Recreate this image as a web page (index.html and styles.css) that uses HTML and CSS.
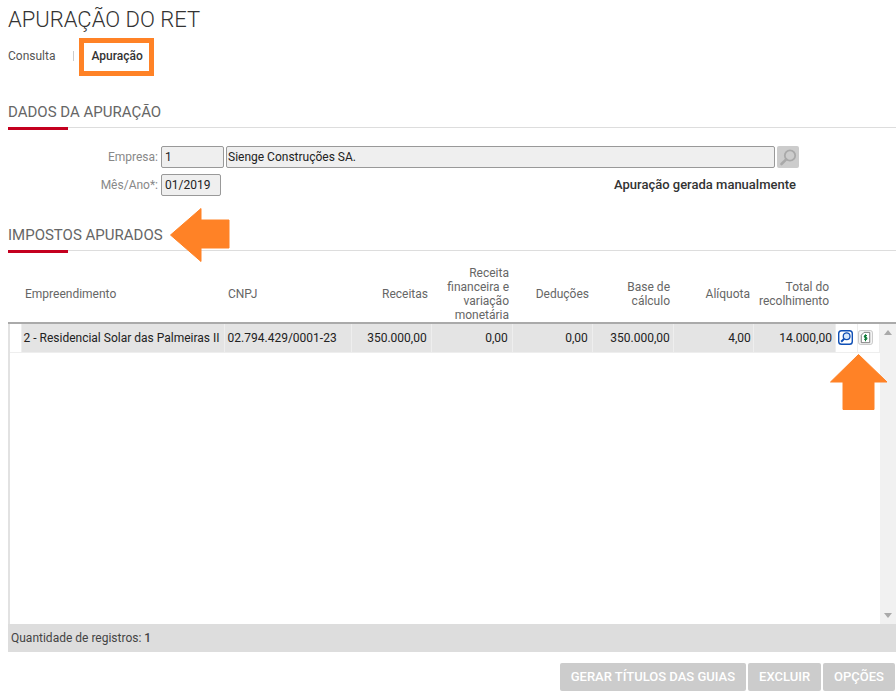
FILE: index.html
```html
<!DOCTYPE html>
<html lang="pt-BR">
<head>
  <meta charset="UTF-8" />
  <meta name="viewport" content="width=device-width, initial-scale=1.0"/>
  <title>Apuração do RET</title>
  <link rel="stylesheet" href="styles.css">
</head>
<body>
  <h1 class="page-title">APURAÇÃO DO RET</h1>

  <!-- Tabs -->
  <div class="tabs">
    <span class="tab">Consulta</span>
    <span class="tab-sep"></span>
    <span class="tab tab-active">Apuração</span>
  </div>

  <!-- Dados da apuração -->
  <h2 class="section-title">DADOS DA APURAÇÃO</h2>
  <div class="form">
    <div class="form-row">
      <label class="form-label">Empresa:</label>
      <div class="field field-code">1</div>
      <div class="field field-name">Sienge Construções SA.</div>
      <div class="search-btn">
        <svg width="22" height="22" viewBox="0 0 22 22" fill="none">
          <circle cx="13" cy="9.5" r="5.2" stroke="#a9a9a9" stroke-width="1.8"/>
          <path d="M9.2 13.4L4.5 18" stroke="#a9a9a9" stroke-width="2.6" stroke-linecap="round"/>
        </svg>
      </div>
    </div>
    <div class="form-row">
      <label class="form-label">Mês/Ano*:</label>
      <div class="field field-date">01/2019</div>
      <div class="form-note">Apuração gerada manualmente</div>
    </div>
  </div>

  <!-- Impostos apurados -->
  <h2 class="section-title section-taxes">IMPOSTOS APURADOS</h2>

  <table class="grid grid-head">
    <tr>
      <th class="c-gap"></th>
      <th class="c-name left">Empreendimento</th>
      <th class="c-cnpj left">CNPJ</th>
      <th class="c-rec">Receitas</th>
      <th class="c-fin">Receita financeira e variação monetária</th>
      <th class="c-ded">Deduções</th>
      <th class="c-base">Base de<br>cálculo</th>
      <th class="c-aliq">Alíquota</th>
      <th class="c-total">Total do<br>recolhimento</th>
      <th class="c-icon"></th>
      <th class="c-icon"></th>
    </tr>
  </table>

  <div class="grid-body">
    <div class="grid-rows">
      <table class="grid">
        <tr class="row">
          <td class="c-gap blank"></td>
          <td class="c-name">2 - Residencial Solar das Palmeiras II</td>
          <td class="c-cnpj">02.794.429/0001-23</td>
          <td class="c-rec num">350.000,00</td>
          <td class="c-fin num">0,00</td>
          <td class="c-ded num">0,00</td>
          <td class="c-base num num-total">350.000,00</td>
          <td class="c-aliq num num-tight">4,00</td>
          <td class="c-total num num-total">14.000,00</td>
          <td class="c-icon blank">
            <svg class="icon icon-view" width="15" height="15" viewBox="0 0 16 16" fill="none">
              <rect x="0.75" y="0.75" width="14.5" height="14.5" rx="3" fill="#fff" stroke="#0f4fb5" stroke-width="1.5"/>
              <circle cx="9.2" cy="6.6" r="3.6" fill="#d8e8fb" stroke="#0f4fb5" stroke-width="1.4"/>
              <path d="M6.6 9.3L3.4 12.5" stroke="#0f4fb5" stroke-width="2"/>
            </svg>
          </td>
          <td class="c-icon blank">
            <svg class="icon icon-doc" width="15" height="15" viewBox="0 0 16 16" fill="none">
              <rect x="0.5" y="0.5" width="15" height="15" rx="2.5" fill="#f4f4f4" stroke="#c4c4c4"/>
              <path d="M6.5 2.5H12.5V13.5H3.5V5.5Z" fill="#fff" stroke="#777"/>
              <path d="M8 4.5V12M9.6 6H7.4C6.4 6 6.4 8 7.6 8H8.6C9.8 8 9.8 10 8.8 10H6.6" stroke="#0c7a36" stroke-width="1.1"/>
            </svg>
          </td>
        </tr>
      </table>
    </div>
    <div class="scrollbar">
      <span class="arrow-up"></span>
      <span class="arrow-down"></span>
    </div>
  </div>

  <div class="grid-foot">Quantidade de registros: <b>1</b></div>

  <div class="actions">
    <button class="btn">GERAR TÍTULOS DAS GUIAS</button>
    <button class="btn">EXCLUIR</button>
    <button class="btn">OPÇÕES</button>
  </div>

  <!-- Callout arrows over the page -->
  <svg class="callout callout-left" width="60" height="54" viewBox="0 0 60 54">
    <path d="M0.5 27L31 0.5V12H59V40H31V53.5Z" fill="#ff8226" stroke="#ff8226" stroke-linejoin="round"/>
  </svg>
  <svg class="callout callout-up" width="58" height="56" viewBox="0 0 58 56">
    <path d="M28.5 0.5L57 28H44V55.5H13V28H0.5Z" fill="#ff8226" stroke="#ff8226" stroke-linejoin="round"/>
  </svg>
</body>
</html>
```

FILE: styles.css
```css
* {
  box-sizing: border-box;
}

body {
  margin: 0;
  padding: 0 0 0 8px;
  font-family: Roboto, Arial, sans-serif;
  font-size: 12px;
  color: #333;
  background: #fff;
  height: 694px;
  overflow: hidden;
  position: relative;
}

.page-title {
  margin: 0;
  padding-top: 7px;
  height: 38px;
  font-size: 22px;
  line-height: 26px;
  font-weight: 300;
  color: #333;
}

.tabs {
  display: flex;
  align-items: center;
  height: 38px;
}

.tab {
  margin-bottom: 2px;
  color: #555;
}

.tab-sep {
  width: 1px;
  height: 10px;
  margin: 0 5px 3px 18px;
  background: #ccc;
}

.tab-active {
  display: flex;
  align-items: center;
  width: 75px;
  height: 38px;
  margin-bottom: 0;
  padding: 0 0 2px 7px;
  border: 5px solid #ff8226;
  font-weight: 500;
  color: #333;
}

.section-title {
  margin: 26px 0 0;
  height: 26px;
  font-size: 15px;
  line-height: 20px;
  font-weight: 400;
  color: #666;
  border-bottom: 1px solid #ddd;
  position: relative;
}

.section-title::after {
  content: "";
  position: absolute;
  left: 0;
  bottom: -3px;
  width: 60px;
  height: 3px;
  background: #c4001f;
}

.form {
  margin-top: 18px;
  display: flex;
  flex-direction: column;
  gap: 6px;
}

.form-row {
  display: flex;
  align-items: center;
  height: 22px;
}

.form-label {
  width: 153px;
  padding-right: 3px;
  text-align: right;
  color: #888;
}

.field {
  height: 22px;
  padding: 0 3px;
  line-height: 20px;
  background: #efefef;
  border: 1px solid #999;
  border-radius: 2px;
  color: #222;
}

.field-code {
  width: 63px;
  margin-right: 2px;
}

.field-name {
  width: 549px;
  margin-right: 2px;
  padding-left: 1px;
}

.field-date {
  width: 60px;
}

.search-btn {
  width: 22px;
  height: 22px;
  background: #ccc;
  border-radius: 2px;
}

.search-btn svg {
  display: block;
}

.form-note {
  margin-left: auto;
  margin-right: 100px;
  margin-bottom: 2px;
  font-size: 13px;
  font-weight: 500;
  color: #333;
}

.section-taxes {
  margin-top: 29px;
}

.grid {
  width: 100%;
  table-layout: fixed;
  border-collapse: collapse;
}

.grid-head {
  margin-top: 14px;
  width: 871px;
  height: 57px;
}

.grid th {
  padding: 0 3px;
  font-weight: 400;
  line-height: 14px;
  text-align: right;
  color: #666;
}

.grid th.left {
  text-align: left;
}

.c-gap { width: 13px; }
.c-name { width: 203px; }
.c-cnpj { width: 127px; }
.c-rec { width: 80px; }
.c-fin { width: 81px; }
.c-ded { width: 80px; }
.c-base { width: 81px; }
.c-aliq { width: 80px; }
.c-total { width: 82px; }
.c-icon { width: 22px; }

.grid th.c-name {
  padding-left: 4px;
}

.grid th.c-cnpj {
  padding-left: 4px;
}

.grid th.c-fin {
  padding-left: 12px;
}

.grid th.c-total {
  padding-right: 6px;
}

.grid-body {
  display: flex;
  height: 302px;
  border-top: 2px solid #aaa;
}

.grid-rows {
  width: 872px;
  border-left: 2px solid #e2e2e2;
}

.grid-rows .grid {
  width: 870px;
}

.grid-rows .c-gap {
  width: 11px;
}

.row {
  height: 28px;
  border-bottom: 1px solid #eee;
}

.row td {
  padding: 0 2px;
  background: #e4e4e4;
  border-right: 1px solid #eee;
  color: #222;
  white-space: nowrap;
}

.row td.c-cnpj {
  padding-left: 3px;
}

.row td.num {
  text-align: right;
  padding-right: 4px;
}

.row td.num-tight {
  padding-right: 2px;
}

.row td.num-total {
  padding-right: 3px;
}

.row td.blank {
  background: #fff;
  padding: 0;
}

.icon {
  display: block;
}

.icon-view {
  margin-left: 2px;
}

.scrollbar {
  flex: 1;
  background: #f1f1f1;
  display: flex;
  flex-direction: column;
  justify-content: space-between;
  align-items: center;
  padding: 6px 0;
}

.arrow-up, .arrow-down {
  width: 0;
  height: 0;
  border-left: 4px solid transparent;
  border-right: 4px solid transparent;
}

.arrow-up {
  border-bottom: 5px solid #aaa;
}

.arrow-down {
  border-top: 5px solid #aaa;
}

.grid-foot {
  height: 28px;
  padding-left: 3px;
  line-height: 28px;
  background: #ddd;
  color: #444;
}

.grid-foot b {
  font-weight: 500;
}

.actions {
  display: flex;
  justify-content: flex-end;
  gap: 2px;
  margin-top: 11px;
  padding-right: 1px;
}

.btn {
  height: 28px;
  padding: 0 11px 2px;
  border: none;
  border-radius: 2px;
  background: #ccc;
  color: #fff;
  font-family: Roboto, Arial, sans-serif;
  font-size: 13px;
  font-weight: 500;
}

.callout {
  position: absolute;
}

.callout-left {
  left: 170px;
  top: 208px;
}

.callout-up {
  left: 830px;
  top: 354px;
}
```
